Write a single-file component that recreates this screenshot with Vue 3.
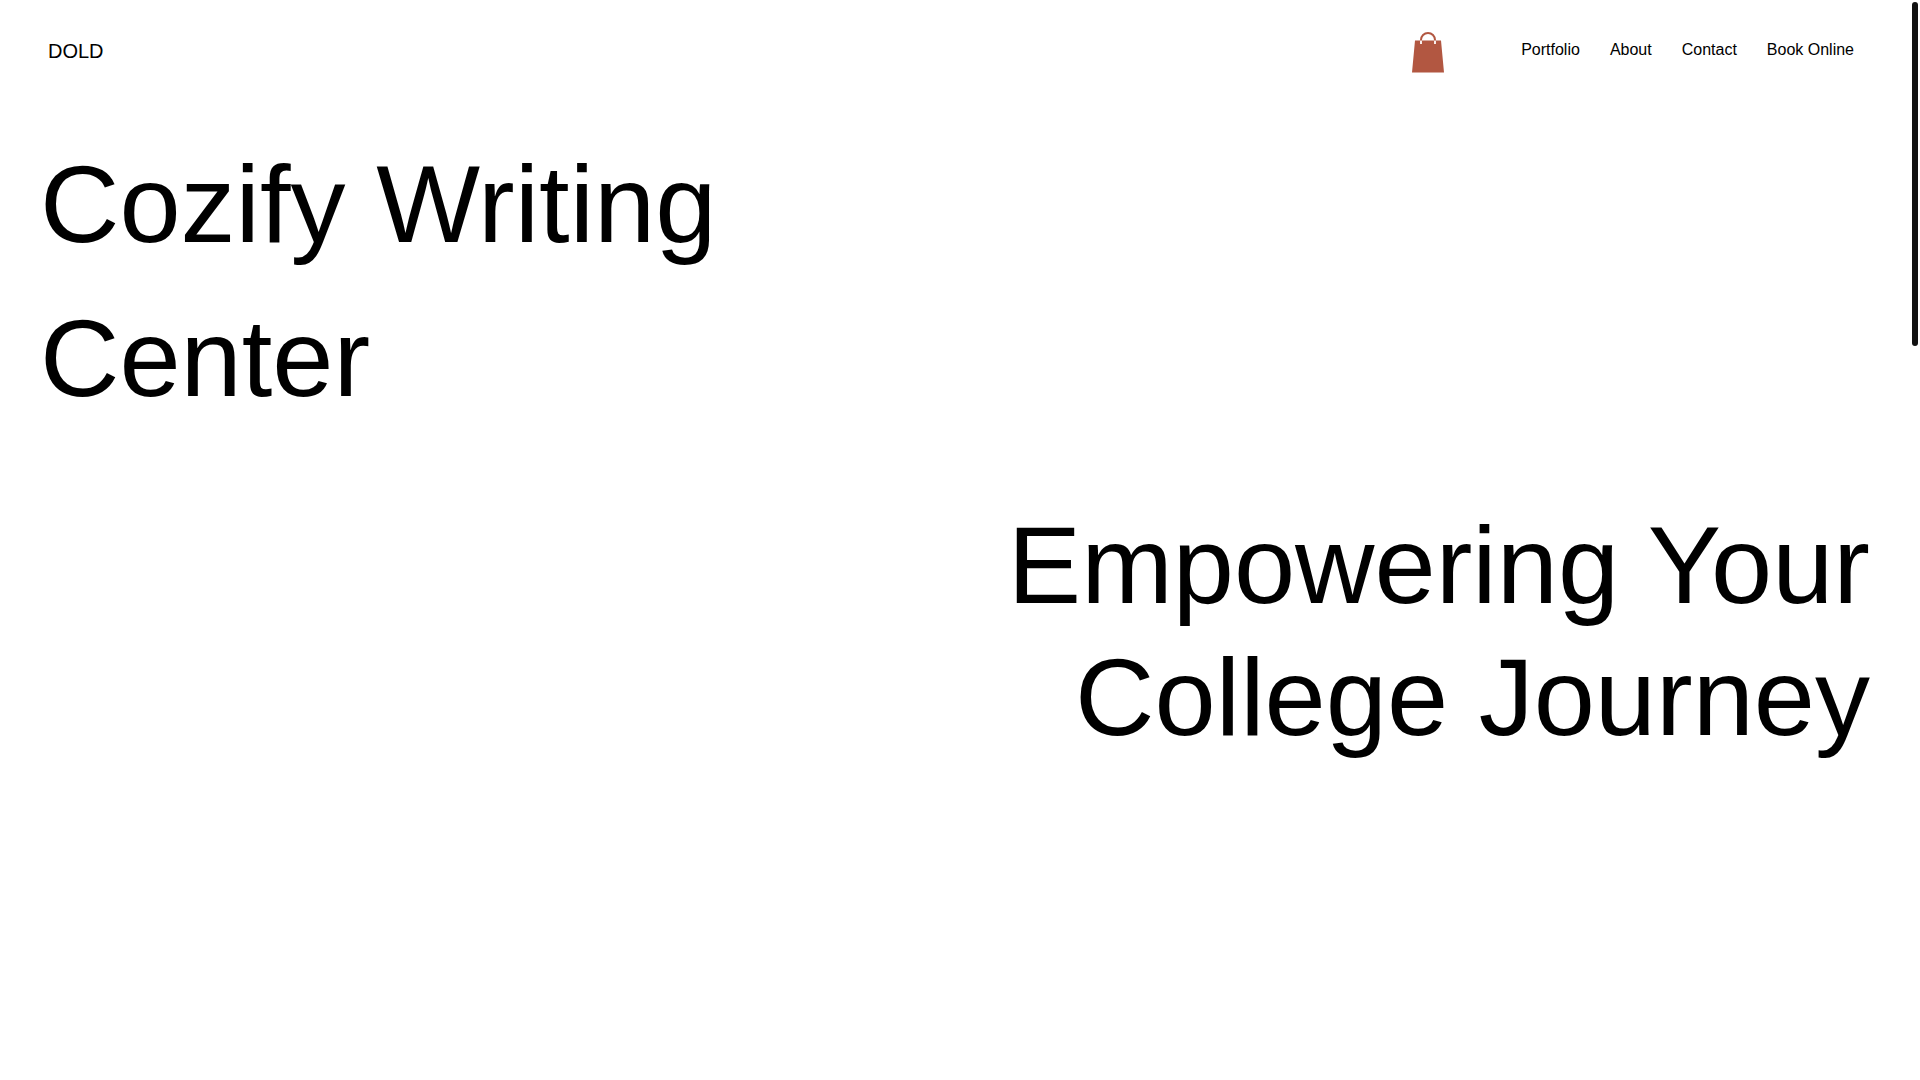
<script setup>
const links = ['Portfolio', 'About', 'Contact', 'Book Online']
</script>

<template>
  <div class="page">
    <header class="header">
      <a class="brand" href="#">DOLD</a>
      <button class="cart" type="button" aria-label="Cart">
        <svg viewBox="0 0 32 41" width="32" height="41" aria-hidden="true">
          <path d="M3 8.400H29L32 40.600H0Z" fill="#b25741" />
          <path d="M9 9V8a7 7 0 0 1 14 0V9" fill="none" stroke="#b25741" stroke-width="2" />
          <path d="M9 8.600v3.400M23 8.600v3.400" fill="none" stroke="#fff" stroke-width="1.800" />
        </svg>
      </button>
      <nav class="nav" aria-label="Site">
        <a v-for="link in links" :key="link" href="#">{{ link }}</a>
      </nav>
    </header>
    <main>
      <h1 class="title">Cozify Writing<br />Center</h1>
      <h2 class="tagline">Empowering Your<br />College Journey</h2>
    </main>
    <div class="scroll-thumb"></div>
  </div>
</template>

<style>
body {
  background: #fff;
}
</style>

<style scoped>
.page {
  font-family: "Liberation Sans", Arial, sans-serif;
  color: #000;
}
.header {
  display: flex;
  align-items: flex-start;
  padding: 32px 66px 27px 48px;
}
.brand {
  margin-right: auto;
  padding-top: 7px;
  font-size: 20px;
  line-height: 24px;
  color: inherit;
  text-decoration: none;
}
.cart {
  margin: 0 77px 0 0;
  padding: 0;
  border: 0;
  background: none;
}
.cart svg {
  display: block;
}
.nav {
  display: flex;
  gap: 30px;
  padding-top: 8px;
  font-size: 16px;
  line-height: 20px;
}
.nav a {
  color: inherit;
  text-decoration: none;
}
.title,
.tagline {
  margin: 0;
  font-size: 110px;
  font-weight: 400;
}
.title {
  padding: 27px 40px 0;
  line-height: 154px;
}
.tagline {
  padding: 64px 50px 0;
  line-height: 132px;
  text-align: right;
}
.scroll-thumb {
  position: fixed;
  top: 2px;
  right: 2px;
  width: 6px;
  height: 344px;
  border-radius: 3px;
  background: #111;
}
</style>
